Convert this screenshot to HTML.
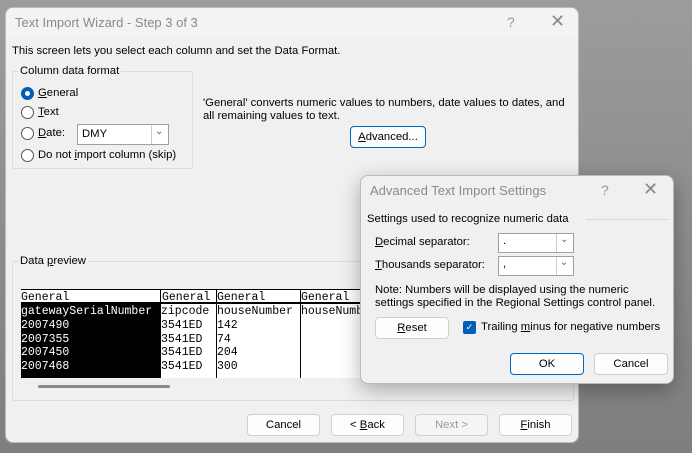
<!DOCTYPE html>
<html><head><style>
*{margin:0;padding:0;box-sizing:border-box}
body{width:692px;height:453px;overflow:hidden;background:linear-gradient(#9c9c9c,#7e7e7e);font-family:"Liberation Sans",sans-serif;font-size:11.3px;color:#000;position:relative}
.a{position:absolute;white-space:nowrap}
.dlg{position:absolute;background:#f0f0f0;border-radius:8px;border:1px solid #bbb}
.btn{position:absolute;background:#fdfdfd;border:1px solid #d0d0d0;border-radius:4px;text-align:center;line-height:20px}
.grp{position:absolute;border:1px solid #dcdcdc;border-radius:2px}
.radio{position:absolute;width:13px;height:13px;border:1px solid #555;border-radius:50%;background:#fff}
.combo{position:absolute;background:#fff;border:1px solid #a0a0a0}
.combo .dd{position:absolute;right:0;top:0;bottom:0;width:17px;border-left:1px solid #ccc;background:#fff}
.mono{font-family:"Liberation Mono",monospace;font-size:11.5px}
u{text-decoration:underline}
</style></head><body>
<div class="dlg" style="left:5px;top:7px;width:574px;height:436px;overflow:hidden">
 <div style="position:absolute;left:0;top:0;right:0;height:30px;background:#f3f3f3"></div>
 <div class="a" style="left:9px;top:7px;color:#8a8a8a;font-size:13px">Text Import Wizard - Step 3 of 3</div>
 <div class="a" style="left:501px;top:6px;color:#999;font-size:14px">?</div>
 <div class="a" style="left:544px;top:3px;color:#888;font-size:18px">✕</div>
 <div class="a" style="left:6px;top:37px">This screen lets you select each column and set the Data Format.</div>
 <div class="grp" style="left:6px;top:63px;width:181px;height:98px"></div>
 <div class="a" style="left:12px;top:57px;background:#f0f0f0;padding:0 2px">Column data format</div>
 <div class="radio" style="left:15px;top:79px;border:4px solid #005fb8"></div>
 <div class="a" style="left:32px;top:79px"><u>G</u>eneral</div>
 <div class="radio" style="left:15px;top:98px"></div>
 <div class="a" style="left:32px;top:98px"><u>T</u>ext</div>
 <div class="radio" style="left:15px;top:119px"></div>
 <div class="a" style="left:32px;top:119px"><u>D</u>ate:</div>
 <div class="combo" style="left:71px;top:116px;width:92px;height:21px"><span class="a" style="left:4px;top:3px">DMY</span><div class="dd"><span class="a" style="left:3px;top:1px;color:#666;font-size:10px">&#8964;</span></div></div>
 <div class="radio" style="left:15px;top:141px"></div>
 <div class="a" style="left:32px;top:141px">Do not <u>i</u>mport column (skip)</div>
 <div class="a" style="left:197px;top:89px">'General' converts numeric values to numbers, date values to dates, and</div>
 <div class="a" style="left:197px;top:102px">all remaining values to text.</div>
 <div class="btn" style="left:344px;top:118px;width:76px;height:22px;border:1px solid #0067c0"><u>A</u>dvanced...</div>
 <div class="grp" style="left:6px;top:253px;width:562px;height:140px"></div>
 <div class="a" style="left:12px;top:247px;background:#f0f0f0;padding:0 2px">Data <u>p</u>review</div>
 <div style="position:absolute;left:15px;top:281px;width:548px;height:89px;background:#fff;border-top:1px solid #000"></div>
 <div class="mono a" style="left:15px;top:283px;line-height:14px">General</div>
 <div class="mono a" style="left:156px;top:283px;line-height:14px">General</div>
 <div class="mono a" style="left:211px;top:283px;line-height:14px">General</div>
 <div class="mono a" style="left:295px;top:283px;line-height:14px">General</div>
 <div style="position:absolute;left:15px;top:294px;width:548px;height:2px;background:#000"></div>
 <div style="position:absolute;left:154px;top:281px;width:1px;height:89px;background:#000"></div>
 <div style="position:absolute;left:210px;top:281px;width:1px;height:89px;background:#000"></div>
 <div style="position:absolute;left:294px;top:281px;width:1px;height:89px;background:#000"></div>
 <div style="position:absolute;left:15px;top:296px;width:139px;height:74px;background:#000"></div>
 <div class="mono a" style="left:15px;top:297px;line-height:13.8px;color:#fff">gatewaySerialNumber<br>2007490<br>2007355<br>2007450<br>2007468</div>
 <div class="mono a" style="left:155px;top:297px;line-height:13.8px">zipcode<br>3541ED<br>3541ED<br>3541ED<br>3541ED</div>
 <div class="mono a" style="left:211px;top:297px;line-height:13.8px">houseNumber<br>142<br>74<br>204<br>300</div>
 <div class="mono a" style="left:295px;top:297px;line-height:13.8px">houseNumber</div>
 <div style="position:absolute;left:32px;top:377px;width:132px;height:3px;background:#8a8a8a;border-radius:2px"></div>
 <div class="btn" style="left:241px;top:406px;width:73px;height:22px">Cancel</div>
 <div class="btn" style="left:325px;top:406px;width:73px;height:22px">&lt; <u>B</u>ack</div>
 <div class="btn" style="left:409px;top:406px;width:73px;height:22px;color:#9a9a9a;background:#f5f5f5">Next &gt;</div>
 <div class="btn" style="left:493px;top:406px;width:73px;height:22px"><u>F</u>inish</div>
</div>
<div class="dlg" style="left:360px;top:175px;width:314px;height:209px;box-shadow:0 6px 20px rgba(0,0,0,.3);background:#f0f0f0">
 <div class="a" style="left:9px;top:7px;color:#8a8a8a;font-size:13px">Advanced Text Import Settings</div>
 <div class="a" style="left:240px;top:6px;color:#999;font-size:14px">?</div>
 <div class="a" style="left:282px;top:3px;color:#888;font-size:18px">✕</div>
 <div class="a" style="left:6px;top:37px">Settings used to recognize numeric data</div>
 <div style="position:absolute;left:225px;top:43px;width:82px;height:1px;background:#d8d8d8"></div>
 <div class="a" style="left:14px;top:60px"><u>D</u>ecimal separator:</div>
 <div class="combo" style="left:137px;top:57px;width:76px;height:20px"><span class="a" style="left:4px;top:1px">.</span><div class="dd"><span class="a" style="left:3px;top:0px;color:#666;font-size:10px">&#8964;</span></div></div>
 <div class="a" style="left:14px;top:83px"><u>T</u>housands separator:</div>
 <div class="combo" style="left:137px;top:80px;width:76px;height:20px"><span class="a" style="left:4px;top:1px">,</span><div class="dd"><span class="a" style="left:3px;top:0px;color:#666;font-size:10px">&#8964;</span></div></div>
 <div class="a" style="left:14px;top:108px;line-height:13px">Note: Numbers will be displayed using the numeric<br>settings specified in the Regional Settings control panel.</div>
 <div class="btn" style="left:14px;top:141px;width:74px;height:22px"><u>R</u>eset</div>
 <div style="position:absolute;left:102px;top:145px;width:13px;height:13px;background:#005fb8;border-radius:2px;color:#fff;font-size:9px;line-height:13px;text-align:center">✓</div>
 <div class="a" style="left:120px;top:145px">Trailing <u>m</u>inus for negative numbers</div>
 <div class="btn" style="left:149px;top:177px;width:74px;height:22px;border:1px solid #0067c0">OK</div>
 <div class="btn" style="left:233px;top:177px;width:74px;height:22px">Cancel</div>
</div>
</body></html>
